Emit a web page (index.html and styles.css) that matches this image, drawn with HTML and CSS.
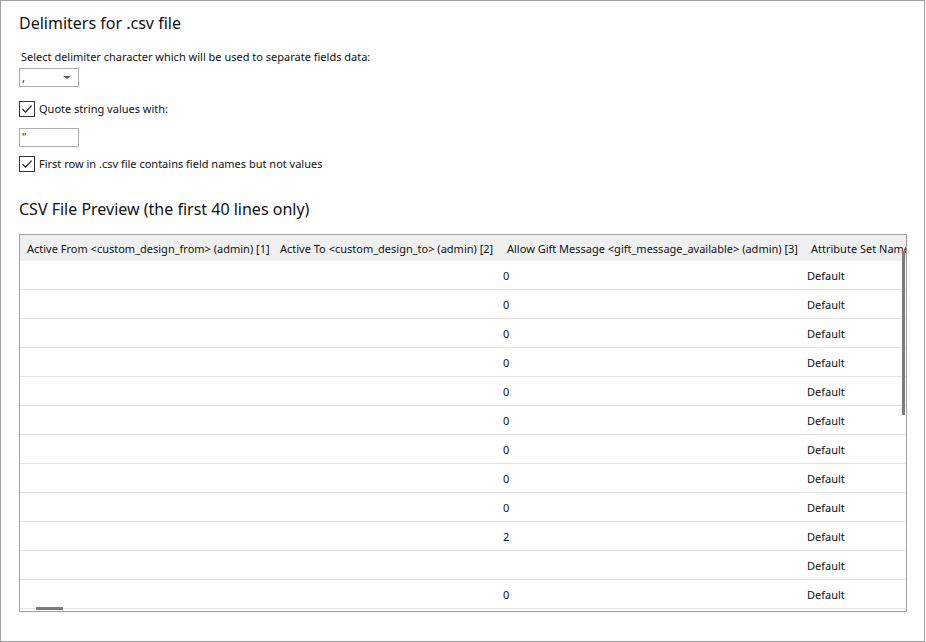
FILE: index.html
```html
<!DOCTYPE html>
<html>
<head>
    <meta charset="UTF-8">
    <title>Delimiters for .csv file</title>
    <link rel="stylesheet" href="styles.css">
</head>
<body>
    <div class="panel">
        <h1 class="section-title">Delimiters for .csv file</h1>
        <p class="hint">Select delimiter character which will be used to separate fields data:</p>
        <div class="combo">
            <span class="combo-value">,</span>
            <span class="combo-arrow"></span>
        </div>

        <label class="check">
            <span class="check-box">
                <svg width="12" height="12" viewBox="0 0 12 12"><path d="M1.5 6.2 L4.5 9.2 L10.6 2.6" fill="none" stroke="#1a1a1a" stroke-width="1.2"/></svg>
            </span>
            Quote string values with:
        </label>
        <div class="textbox">"</div>

        <label class="check">
            <span class="check-box">
                <svg width="12" height="12" viewBox="0 0 12 12"><path d="M1.5 6.2 L4.5 9.2 L10.6 2.6" fill="none" stroke="#1a1a1a" stroke-width="1.2"/></svg>
            </span>
            First row in .csv file contains field names but not values
        </label>

        <h2 class="section-title preview-title">CSV File Preview (the first 40 lines only)</h2>

        <div class="grid">
            <div class="grid-row grid-head">
                <div class="cell">Active From &lt;custom_design_from&gt; (admin) [1]</div>
                <div class="cell">Active To &lt;custom_design_to&gt; (admin) [2]</div>
                <div class="cell">Allow Gift Message &lt;gift_message_available&gt; (admin) [3]</div>
                <div class="cell">Attribute Set Name</div>
            </div>
            <div class="grid-row"><div class="cell"></div><div class="cell"></div><div class="cell">0</div><div class="cell">Default</div></div>
            <div class="grid-row"><div class="cell"></div><div class="cell"></div><div class="cell">0</div><div class="cell">Default</div></div>
            <div class="grid-row"><div class="cell"></div><div class="cell"></div><div class="cell">0</div><div class="cell">Default</div></div>
            <div class="grid-row"><div class="cell"></div><div class="cell"></div><div class="cell">0</div><div class="cell">Default</div></div>
            <div class="grid-row"><div class="cell"></div><div class="cell"></div><div class="cell">0</div><div class="cell">Default</div></div>
            <div class="grid-row"><div class="cell"></div><div class="cell"></div><div class="cell">0</div><div class="cell">Default</div></div>
            <div class="grid-row"><div class="cell"></div><div class="cell"></div><div class="cell">0</div><div class="cell">Default</div></div>
            <div class="grid-row"><div class="cell"></div><div class="cell"></div><div class="cell">0</div><div class="cell">Default</div></div>
            <div class="grid-row"><div class="cell"></div><div class="cell"></div><div class="cell">0</div><div class="cell">Default</div></div>
            <div class="grid-row"><div class="cell"></div><div class="cell"></div><div class="cell">2</div><div class="cell">Default</div></div>
            <div class="grid-row"><div class="cell"></div><div class="cell"></div><div class="cell"></div><div class="cell">Default</div></div>
            <div class="grid-row"><div class="cell"></div><div class="cell"></div><div class="cell">0</div><div class="cell">Default</div></div>

            <div class="scroll-v"></div>
            <div class="scroll-h"></div>
        </div>
    </div>
</body>
</html>
```

FILE: styles.css
```css
/* CSS styles */
:root {
    --frame: #a0a0a0;
    --line: #e3e3e3;
    --head: #f0f0f0;
    --text: #111111;
    --thumb: #7a7a7a;
}

* {
    margin: 0;
    padding: 0;
    box-sizing: border-box;
}

body {
    background: #ffffff;
    color: var(--text);
    font-family: "Noto Sans", "Open Sans", sans-serif;
    font-size: 11px;
    width: 926px;
    height: 642px;
    overflow: hidden;
}

.panel {
    height: 642px;
    width: 925px;
    border: 1px solid var(--frame);
    padding: 11px 0 0 18px;
}

.section-title {
    font-weight: normal;
    font-size: 16px;
    line-height: 23px;
    color: #111;
}

.hint {
    margin: 14px 0 0 2px;
    line-height: 16px;
}

.combo {
    margin-top: 3px;
    width: 60px;
    height: 19px;
    border: 1px solid #adadad;
    display: flex;
    align-items: center;
    justify-content: space-between;
    padding: 0 7px 0 2px;
}

.combo-value {
    line-height: 14px;
}

.combo-arrow {
    width: 0;
    height: 0;
    border-left: 4px solid transparent;
    border-right: 4px solid transparent;
    border-top: 3px solid #555;
}

.check {
    display: flex;
    align-items: center;
    gap: 4px;
    line-height: 16px;
}

.check-box {
    width: 16px;
    height: 16px;
    border: 1px solid #333;
    display: flex;
    align-items: center;
    justify-content: center;
}

.panel > .check:nth-of-type(1) {
    margin-top: 14px;
}

.textbox {
    margin-top: 11px;
    width: 60px;
    height: 19px;
    border: 1px solid #adadad;
    padding-left: 2px;
    line-height: 15px;
}

.textbox + .check {
    margin-top: 9px;
}

.preview-title {
    margin-top: 26px;
}

.grid {
    position: relative;
    margin-top: 13px;
    width: 888px;
    height: 378px;
    border: 1px solid var(--frame);
    overflow: hidden;
}

.grid-row {
    display: grid;
    grid-template-columns: 253px 227px 304px 300px;
    height: 29px;
    border-bottom: 1px solid var(--line);
    white-space: nowrap;
}

.grid-head {
    height: 26px;
    background: var(--head);
    border-bottom: none;
}

.cell {
    padding-left: 3px;
    display: flex;
    align-items: center;
}

.grid-head .cell {
    padding-left: 7px;
}

.scroll-v {
    position: absolute;
    top: 16px;
    right: 1px;
    width: 3px;
    height: 164px;
    background: var(--thumb);
}

.scroll-h {
    position: absolute;
    left: 16px;
    bottom: 1px;
    width: 27px;
    height: 3px;
    background: var(--thumb);
}
```
